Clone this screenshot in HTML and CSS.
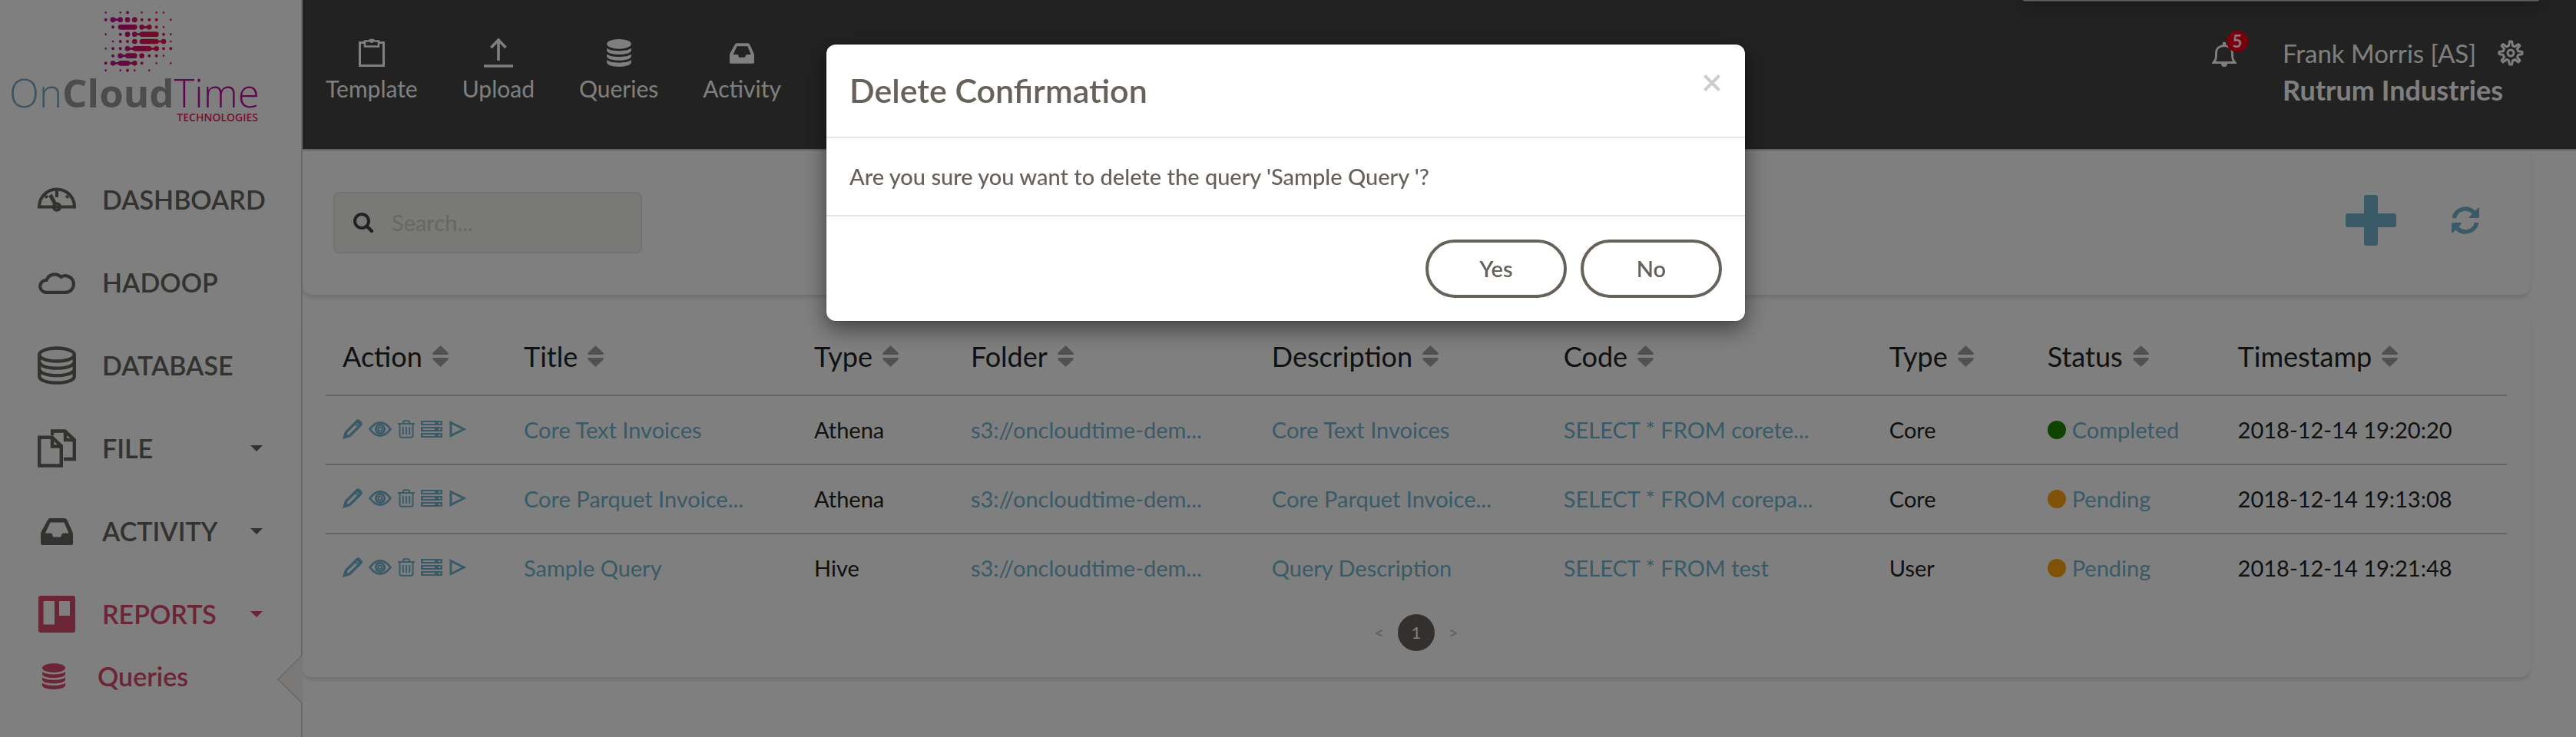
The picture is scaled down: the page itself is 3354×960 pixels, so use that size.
FILE: index.html
```html
<!DOCTYPE html>
<html lang="en">
<head>
<meta charset="utf-8">
<title>OnCloudTime - Queries</title>
<link rel="stylesheet" href="styles.css">
</head>
<body>
<svg class="sprite" aria-hidden="true">
  <symbol id="i-gauge" viewBox="0 0 50 32"><path d="M2 25.500A23 23 0 0 1 48 25.500z" fill="none" stroke="currentColor" stroke-width="4"/><path d="M25 4v9" stroke="currentColor" stroke-width="4"/><path d="M16.500 10l6.500 12" stroke="currentColor" stroke-width="5"/><path d="M9 9.500l4 4M41 9.500l-4 4M9.500 14l4-3M40.500 14l-4-3" stroke="currentColor" stroke-width="2"/><circle cx="25" cy="25.500" r="4.200" fill="none" stroke="currentColor" stroke-width="4"/></symbol>
  <symbol id="i-cloud" viewBox="0 0 50 29"><path d="M10 26.800A8 8 0 0 1 11.500 10.900A11.500 11.500 0 0 1 30.500 6.800A10.800 10.800 0 1 1 37 26.800z" fill="none" stroke="currentColor" stroke-width="4.200"/></symbol>
  <symbol id="i-dbline" viewBox="0 0 50 50"><g fill="none" stroke="currentColor" stroke-width="4.400"><ellipse cx="25" cy="11" rx="22.800" ry="8.500"/><path d="M2.200 11v28c0 11.500 45.600 11.500 45.600 0V11M2.200 20c0 11.500 45.600 11.500 45.600 0M2.200 29.500c0 11.500 45.600 11.500 45.600 0"/></g></symbol>
  <symbol id="i-files" viewBox="0 0 50 50"><g fill="none" stroke="currentColor" stroke-width="4.400"><path d="M2.200 10.700H19L30.800 22V47.500H2.200z"/><path d="M19 10V22.500H31"/><path d="M19.200 8V2.500H35.500L47.800 14V39H34"/><path d="M36 2V14H48"/></g></symbol>
  <symbol id="i-inbox" viewBox="0 0 42 35"><path fill="currentColor" fill-rule="evenodd" d="M9 2.500Q10 0 12 0H31Q33.500 0 34.500 2.500L41 17Q42 19 42 21V33Q42 35 40 35H2Q0 35 0 33V21Q0 19 1 17zM12.500 5.500L6 19.500H13Q14.500 19.500 15 21L16 24.500H26L27.500 21Q28 19.500 29.500 19.500H36.500L30.500 5.500z"/></symbol>
  <symbol id="i-board" viewBox="0 0 48 48"><path fill="currentColor" fill-rule="evenodd" d="M3 0H45Q48 0 48 3V45Q48 48 45 48H3Q0 48 0 45V3Q0 0 3 0zM6.500 7V37.500H21V7zM27 7V26H41V7z"/></symbol>
  <symbol id="i-db" viewBox="0 0 30 34"><g fill="currentColor"><ellipse cx="15" cy="6" rx="15" ry="6"/><path id="band" d="M0 11c5 4.500 25 4.500 30 0v3.500c-2 6-28 6-30 0z"/><use href="#band" y="7.300"/><path d="M0 25.600c5 4.500 25 4.500 30 0v3.500c-2 6.500-28 6.500-30 0z"/></g></symbol>
  <symbol id="i-clip" viewBox="0 0 34 38"><g fill="none" stroke="currentColor"><path d="M8 5.500H1.500V35.500H32.500V5.500H26" stroke-width="3"/><path d="M8 3.500H13Q17 0 21 3.500H26V10.500H8z" stroke-width="2.600"/></g><circle cx="17" cy="3.500" r="2.500" fill="currentColor"/></symbol>
  <symbol id="i-up" viewBox="0 0 38 38"><path d="M19 29V3M9.500 12L19 2L28.500 12M0 36H38" fill="none" stroke="currentColor" stroke-width="3.600"/></symbol>
  <symbol id="i-bell" viewBox="0 0 32 32"><path d="M2 26.500C5.500 23 5.500 20 5.500 13.500C5.500 1.500 26.500 1.500 26.500 13.500C26.500 20 26.500 23 30 26.500z" fill="none" stroke="currentColor" stroke-width="2.800"/><path d="M16 0V4" stroke="currentColor" stroke-width="4"/><path d="M12 28h8q0 4-4 4t-4-4z" fill="currentColor"/></symbol>
  <symbol id="i-gear" viewBox="0 0 34 34"><g fill="none" stroke="currentColor" stroke-width="3" stroke-linejoin="round"><path d="M15.500 2H18.500L19.500 7.500L22.500 8.800L27 5.500L29 7.500L25.500 11.500L26.800 14.800L32 15.500V18.500L26.800 19.500L25.500 22.500L29 27L27 29L22.500 25.500L19.500 26.800L18.500 32H15.500L14.500 26.800L11.500 25.500L7 29L5 27L8.500 22.500L7.200 19.500L2 18.500V15.500L7.200 14.800L8.500 11.500L5 7.500L7 5.500L11.500 8.800L14.500 7.500z"/><circle cx="17" cy="17" r="4"/></g></symbol>
  <symbol id="i-search" viewBox="0 0 26 26"><circle cx="11" cy="11" r="9" fill="none" stroke="currentColor" stroke-width="4"/><path d="M17.500 17.500L24 24" stroke="currentColor" stroke-width="4.500" stroke-linecap="round"/></symbol>
  <symbol id="i-plus" viewBox="0 0 66 66"><path fill="currentColor" d="M27 0H39Q42 0 42 3V24H63Q66 24 66 27V39Q66 42 63 42H42V63Q42 66 39 66H27Q24 66 24 63V42H3Q0 42 0 39V27Q0 24 3 24H24V3Q24 0 27 0z"/></symbol>
  <symbol id="i-sync" viewBox="0 0 36 36"><g id="half"><path d="M3.200 15A15 15 0 0 1 29 8" fill="none" stroke="currentColor" stroke-width="5.600"/><path fill="currentColor" d="M34.500 1.800Q36 1 36 3V13Q36 15 34 15H24Q22 15 23.500 13z"/></g><use href="#half" transform="rotate(180 18 18)"/></symbol>
  <symbol id="i-pencil" viewBox="0 0 26 26"><g fill="none" stroke="currentColor" stroke-width="3.400"><path d="M3 23L5 16.500L18.500 3Q20 1.200 21.500 2.600L23.600 4.700Q25 6.300 23.200 7.800L9.500 21.500z"/><path d="M16 5L21.500 10.500M18.500 3L23.500 8" stroke-width="2.200"/></g><path d="M0 26L2.500 17L9 23.500z" fill="currentColor"/></symbol>
  <symbol id="i-eye" viewBox="0 0 30 20"><g fill="none" stroke="currentColor" stroke-width="2.800"><path d="M1.500 10Q8 1.400 15 1.400T28.500 10Q22 18.600 15 18.600T1.500 10z"/><circle cx="15" cy="10" r="5.600"/></g><circle cx="15" cy="10" r="2.600" fill="none" stroke="currentColor" stroke-width="2"/></symbol>
  <symbol id="i-trash" viewBox="0 0 22 24"><path d="M0 5H22M6.500 5Q6.500 1.200 9 1.200H13Q15.500 1.200 15.500 5M2.500 5V20.500Q2.500 22.800 5 22.800H17Q19.500 22.800 19.500 20.500V5M6.800 9V19M11 9V19M15.200 9V19" fill="none" stroke="currentColor" stroke-width="2"/></symbol>
  <symbol id="i-rows" viewBox="0 0 28 22"><path fill="currentColor" fill-rule="evenodd" d="M0 0H28V6H0zM2.500 2V4H18V2zM23 2V4H25.500V2zM0 8H28V14H0zM2.500 10V12H18V10zM23 10V12H25.500V10zM0 16H28V22H0zM2.500 18V20H18V18zM23 18V20H25.500V18z"/></symbol>
  <symbol id="i-play" viewBox="0 0 22 22"><path d="M2 2.500L19 11L2 19.500z" fill="none" stroke="currentColor" stroke-width="3"/></symbol>
  <symbol id="i-sort" viewBox="0 0 21 28"><path fill="currentColor" d="M10.500 0L20 9Q22 12 19 12H2Q-1 12 1 9zM10.500 28L20 19Q22 16 19 16H2Q-1 16 1 19z"/></symbol>
  <symbol id="i-close" viewBox="0 0 22 22"><path d="M1.500 1.500L20.500 20.500M20.500 1.500L1.500 20.500" stroke="currentColor" stroke-width="4"/></symbol>
</svg>

<div class="app">
  <aside class="sidebar">
    <a class="logo" href="#">
      <svg class="logo-mark" viewBox="405 43 270 240" fill="none" stroke="url(#mark)" stroke-linecap="round">
        <defs><linearGradient id="mark" gradientUnits="userSpaceOnUse" x1="430" y1="0" x2="600" y2="0"><stop offset="0" stop-color="#b8129a"/><stop offset="1" stop-color="#e61650"/></linearGradient></defs>
        <path stroke-width="8" d="M413 50h.1M470 50h.1M554 50h.1M611 50h.1M639 50h.1M667 78h.1M639 107h.1M413 135h.1M667 135h.1M441 163h.1M667 163h.1M413 191h.1M639 219h.1M611 248h.1M667 248h.1M413 276h.1M470 276h.1M526 276h.1M583 276h.1M441 78.100L470 78M554 107.100L583 107M526 135.100L555 135M611 163.100L639 163M498 191.100L611 191M470 219.100L500 219M441 248.100L526 248"/>
        <path stroke-width="12" d="M498 50h.1M413 78h.1M554 78h.1M583 78h.1M611 78h.1M441 107h.1M611 107h.1M470 135h.1M639 135h.1M470 163h.1M498 163h.1M441 191h.1M470 191h.1M639 191h.1M667 191h.1M441 219h.1M583 219h.1M611 219h.1M413 248h.1M554 248h.1M498 276h.1"/>
        <path stroke-width="20" d="M441 78h.1M470 78h.1M498 78h.1M526 78h.1M471 107.100L526 107M554 107h.1M583 107h.1M498 135h.1M526 135h.1M555 135.100L610 135M526 163h.1M555 163.100L610 163M639 163h.1M498 191h.1M527 191.100L582 191M611 191h.1M470 219h.1M499 219.100L526 219M554 219h.1M441 248h.1M471 248.100L498 248M526 248h.1"/>
      </svg>
      <span class="logo-name"><span class="on">On</span><span class="cloud">Cloud</span><span class="time">Time</span></span>
      <span class="logo-sub">TECHNOLOGIES</span>
    </a>
    <nav class="menu">
      <a class="item" href="#"><span class="pic"><svg class="w50 gauge"><use href="#i-gauge"/></svg></span><span class="label">DASHBOARD</span></a>
      <a class="item" href="#"><span class="pic"><svg class="w50 cloudpic"><use href="#i-cloud"/></svg></span><span class="label">HADOOP</span></a>
      <a class="item" href="#"><span class="pic"><svg class="w50 square"><use href="#i-dbline"/></svg></span><span class="label">DATABASE</span></a>
      <a class="item" href="#"><span class="pic"><svg class="w50 square"><use href="#i-files"/></svg></span><span class="label">FILE</span><span class="caret"></span></a>
      <a class="item" href="#"><span class="pic"><svg class="tray"><use href="#i-inbox"/></svg></span><span class="label">ACTIVITY</span><span class="caret"></span></a>
      <a class="item active" href="#"><span class="pic"><svg class="board"><use href="#i-board"/></svg></span><span class="label">REPORTS</span><span class="caret"></span></a>
      <a class="item sub active" href="#"><svg class="db"><use href="#i-db"/></svg><span class="label">Queries</span><svg class="notch" viewBox="0 0 33 66"><path d="M33 1L1 33L33 65" fill="#f4f3ef" stroke="#d2d0cc" stroke-width="1.500"/></svg></a>
    </nav>
  </aside>

  <div class="main">
    <header class="topbar">
      <nav class="tools">
        <a href="#"><span class="glyph"><svg class="clip"><use href="#i-clip"/></svg></span>Template</a>
        <a href="#"><span class="glyph"><svg class="up"><use href="#i-up"/></svg></span>Upload</a>
        <a href="#"><span class="glyph"><svg class="stack"><use href="#i-db"/></svg></span>Queries</a>
        <a href="#"><span class="glyph"><svg class="inbox"><use href="#i-inbox"/></svg></span>Activity</a>
      </nav>
      <div class="account">
        <button class="bell" aria-label="Notifications"><svg><use href="#i-bell"/></svg><span class="badge">5</span></button>
        <div class="who">
          <div class="user"><span>Frank Morris [AS]</span><button class="gear" aria-label="Settings"><svg><use href="#i-gear"/></svg></button></div>
          <div class="company">Rutrum Industries</div>
        </div>
      </div>
    </header>

    <main class="content">
      <section class="card toolbar">
        <label class="search"><svg><use href="#i-search"/></svg><input type="text" placeholder="Search..." aria-label="Search"></label>
        <div class="buttons">
          <button class="add" aria-label="Add"><svg><use href="#i-plus"/></svg></button>
          <button class="sync" aria-label="Refresh"><svg><use href="#i-sync"/></svg></button>
        </div>
      </section>

      <section class="card list">
        <table>
          <colgroup><col class="c-action"><col class="c-title"><col class="c-engine"><col class="c-folder"><col class="c-desc"><col class="c-code"><col class="c-type"><col class="c-status"><col class="c-time"></colgroup>
          <thead><tr>
            <th><button>Action<svg><use href="#i-sort"/></svg></button></th>
            <th><button>Title<svg><use href="#i-sort"/></svg></button></th>
            <th><button>Type<svg><use href="#i-sort"/></svg></button></th>
            <th><button>Folder<svg><use href="#i-sort"/></svg></button></th>
            <th><button>Description<svg><use href="#i-sort"/></svg></button></th>
            <th><button>Code<svg><use href="#i-sort"/></svg></button></th>
            <th><button>Type<svg><use href="#i-sort"/></svg></button></th>
            <th><button>Status<svg><use href="#i-sort"/></svg></button></th>
            <th><button>Timestamp<svg><use href="#i-sort"/></svg></button></th>
          </tr></thead>
          <tbody>
            <tr>
              <td><div class="acts"><button aria-label="Edit"><svg class="a-pencil"><use href="#i-pencil"/></svg></button><button aria-label="View"><svg class="a-eye"><use href="#i-eye"/></svg></button><button aria-label="Delete"><svg class="a-trash"><use href="#i-trash"/></svg></button><button aria-label="Log"><svg class="a-rows"><use href="#i-rows"/></svg></button><button aria-label="Run"><svg class="a-play"><use href="#i-play"/></svg></button></div></td>
              <td><a href="#">Core Text Invoices</a></td><td>Athena</td><td><a href="#">s3://oncloudtime-dem...</a></td><td><a href="#">Core Text Invoices</a></td><td><a href="#">SELECT * FROM corete...</a></td><td>Core</td><td><a class="status done" href="#">Completed</a></td><td>2018-12-14 19:20:20</td>
            </tr>
            <tr>
              <td><div class="acts"><button aria-label="Edit"><svg class="a-pencil"><use href="#i-pencil"/></svg></button><button aria-label="View"><svg class="a-eye"><use href="#i-eye"/></svg></button><button aria-label="Delete"><svg class="a-trash"><use href="#i-trash"/></svg></button><button aria-label="Log"><svg class="a-rows"><use href="#i-rows"/></svg></button><button aria-label="Run"><svg class="a-play"><use href="#i-play"/></svg></button></div></td>
              <td><a href="#">Core Parquet Invoice...</a></td><td>Athena</td><td><a href="#">s3://oncloudtime-dem...</a></td><td><a href="#">Core Parquet Invoice...</a></td><td><a href="#">SELECT * FROM corepa...</a></td><td>Core</td><td><a class="status" href="#">Pending</a></td><td>2018-12-14 19:13:08</td>
            </tr>
            <tr>
              <td><div class="acts"><button aria-label="Edit"><svg class="a-pencil"><use href="#i-pencil"/></svg></button><button aria-label="View"><svg class="a-eye"><use href="#i-eye"/></svg></button><button aria-label="Delete"><svg class="a-trash"><use href="#i-trash"/></svg></button><button aria-label="Log"><svg class="a-rows"><use href="#i-rows"/></svg></button><button aria-label="Run"><svg class="a-play"><use href="#i-play"/></svg></button></div></td>
              <td><a href="#">Sample Query</a></td><td>Hive</td><td><a href="#">s3://oncloudtime-dem...</a></td><td><a href="#">Query Description</a></td><td><a href="#">SELECT * FROM test</a></td><td>User</td><td><a class="status" href="#">Pending</a></td><td>2018-12-14 19:21:48</td>
            </tr>
          </tbody>
        </table>
        <nav class="pager" aria-label="Pages"><button>&lt;</button><button class="current">1</button><button>&gt;</button></nav>
      </section>
    </main>
  </div>
</div>

<div class="overlay">
  <div class="modal" role="dialog" aria-labelledby="modal-title">
    <div class="modal-head"><h2 id="modal-title">Delete Confirmation</h2><button class="close" aria-label="Close"><svg><use href="#i-close"/></svg></button></div>
    <p class="modal-body">Are you sure you want to delete the query 'Sample Query '?</p>
    <div class="modal-foot"><button>Yes</button><button>No</button></div>
  </div>
</div>
<div class="toast"></div>
</body>
</html>
```

FILE: styles.css
```css
* { box-sizing: border-box; }
html, body { height: 100%; }
body { margin: 0; background: #fff; color: #222; font-family: Lato, "Open Sans", sans-serif; font-size: 29px; line-height: 40px; overflow: hidden; }
a { color: inherit; text-decoration: none; }
button { margin: 0; padding: 0; border: 0; background: none; color: inherit; font: inherit; cursor: pointer; }
svg { display: block; flex: none; }
.sprite { position: absolute; width: 0; height: 0; }

.app { display: flex; min-height: 100%; }

/* Sidebar */
.sidebar { flex: none; width: 394px; border-right: 2px solid #d4d4d4; color: #66645f; }
.logo { display: flex; flex-direction: column; align-items: center; height: 206px; padding-top: 14px; font-family: "Open Sans", sans-serif; }
.logo-mark { width: 90px; height: 80px; margin-right: 32px; }
.logo-name { align-self: flex-start; padding-left: 12px; font-size: 51px; line-height: 52px; font-weight: 300; }
.on { color: #74aabf; }
.cloud { color: #96989c; font-weight: 700; }
.time { color: #b8109c; }
.logo-sub { align-self: flex-end; padding-right: 56px; color: #e81e5c; font-size: 14px; line-height: 14px; font-weight: 600; }
.menu { display: flex; flex-direction: column; }
.item { display: flex; align-items: center; height: 108px; padding: 0 50px 0 49px; font-size: 34px; font-weight: 600; }
.item.active { color: #d8486e; }
.pic { display: flex; justify-content: center; width: 50px; margin-right: 34px; }
.w50 { width: 50px; }
.gauge { height: 32px; }
.cloudpic { height: 29px; }
.square { height: 50px; }
.tray { width: 42px; height: 35px; }
.board { width: 48px; height: 48px; }
.label { flex: 1; }
.caret { border: 8px solid transparent; border-top-color: currentColor; border-bottom: 0; }
.item.sub { position: relative; height: 58px; padding: 0 50px 4px 55px; }
.db { width: 30px; height: 34px; margin-right: 42px; }
.notch { position: absolute; right: -2px; top: -2px; width: 33px; height: 66px; }

/* Top bar */
.main { flex: 1; min-width: 0; }
.topbar { display: flex; justify-content: space-between; height: 196px; padding: 43px 68px 0 30px; border-bottom: 2px solid #c8c8c8; background: #444; color: #fff; }
.tools { display: flex; gap: 58px; font-size: 30px; }
.tools a { display: flex; flex-direction: column; align-items: center; }
.glyph { display: flex; align-items: center; height: 52px; }
.clip { width: 34px; height: 38px; }
.up { width: 38px; height: 38px; }
.stack { width: 32px; height: 36px; }
.inbox { width: 32px; height: 27px; }
.account { display: flex; gap: 60px; }
.bell { position: relative; align-self: flex-start; margin-top: 12px; }
.bell svg { width: 32px; height: 32px; }
.badge { position: absolute; left: 19px; top: -15px; width: 28px; height: 28px; border-radius: 50%; background: #f00018; font-size: 22px; line-height: 28px; font-weight: 700; }
.who { width: 314px; }
.user { display: flex; align-items: center; justify-content: space-between; height: 52px; font-size: 33px; }
.gear svg { width: 34px; height: 34px; }
.company { font-size: 36px; line-height: 44px; font-weight: 700; }

/* Cards */
.content { padding-right: 60px; }
.card { border-radius: 0 0 12px 12px; background: #fff; box-shadow: 0 4px 4px rgba(204, 197, 185, 0.5); }
.toolbar { display: flex; align-items: center; justify-content: space-between; height: 188px; padding: 0 66px 0 40px; }
.search { display: flex; align-items: center; gap: 24px; width: 402px; height: 80px; padding: 0 24px; border: 2px solid #e6e4de; border-radius: 8px; background: #f3f2ee; }
.search svg { width: 26px; height: 26px; color: #444; }
.search input { flex: 1; min-width: 0; padding: 0; border: 0; outline: 0; background: none; font: inherit; }
.search input::placeholder { color: #cfcec8; opacity: 1; }
.buttons { display: flex; align-items: center; gap: 72px; padding-bottom: 6px; color: #72b4cc; }
.add svg { width: 66px; height: 66px; }
.sync svg { width: 36px; height: 36px; }

.list { margin-top: 20px; padding: 10px 30px 34px; border-radius: 12px; }
table { width: 100%; table-layout: fixed; border-collapse: separate; border-spacing: 0; }
.c-action { width: 8.31%; }
.c-title { width: 13.31%; }
.c-engine { width: 7.18%; }
.c-folder { width: 13.8%; }
.c-desc { width: 13.38%; }
.c-code { width: 14.93%; }
.c-type { width: 7.25%; }
.c-status { width: 8.73%; }
.c-time { width: 13.11%; }
th, td { padding: 0 0 0 22px; border-bottom: 2px solid #ccc5b9; text-align: left; white-space: nowrap; }
th { height: 102px; font-weight: 400; font-size: 36px; }
th button { display: flex; align-items: center; gap: 13px; }
th svg { width: 21px; height: 28px; color: #a2a2a2; }
td { height: 90px; }
tbody tr:last-child td { border-bottom-color: transparent; }
td a, .acts { color: #72b4cc; }
.acts { display: flex; align-items: center; gap: 8px; padding-bottom: 3px; }
.a-pencil { width: 26px; height: 26px; }
.a-eye { width: 30px; height: 20px; }
.a-trash { width: 22px; height: 24px; }
.a-rows { width: 28px; height: 22px; }
.a-play { width: 24px; height: 22px; }
.status { display: flex; align-items: center; gap: 8px; }
.status::before { content: ""; width: 24px; height: 24px; border-radius: 50%; background: #ffa510; }
.status.done::before { background: #1c8800; }
.pager { display: flex; align-items: center; justify-content: center; gap: 18px; margin-top: 14px; color: #bbb; font-size: 22px; line-height: 48px; }
.current { width: 48px; height: 48px; border-radius: 50%; background: #66615b; color: #fff; }

/* Modal */
.overlay { position: fixed; inset: 0; padding: 58px 6px 0 0; background: rgba(0, 0, 0, 0.5); }
.modal { width: 1196px; max-width: 100%; margin: 0 auto; border-radius: 12px; background: #fff; color: #66615b; box-shadow: 0 10px 30px rgba(0, 0, 0, 0.5), 0 0 2px rgba(0, 0, 0, 0.5); }
.modal-head { display: flex; align-items: flex-start; justify-content: space-between; height: 122px; padding: 30px 32px 30px 30px; border-bottom: 2px solid #e5e5e5; }
.modal-head h2 { margin: 0; font-size: 43px; line-height: 60px; font-weight: 600; }
.close { margin-top: 9px; color: #ccc; }
.close svg { width: 22px; height: 22px; }
.modal-body { margin: 0; padding: 30px; border-bottom: 2px solid #e5e5e5; font-weight: 500; }
.modal-foot { display: flex; justify-content: flex-end; gap: 18px; padding: 30px; }
.modal-foot button { width: 184px; height: 76px; border: 4px solid #66615b; border-radius: 38px; font-weight: 600; }

/* Panel edge that hangs over the top of the window */
.toast { position: absolute; top: -12px; right: 44px; width: 680px; height: 15px; border: 1px solid #080808; border-radius: 12px; background: #5a5a5a; box-shadow: 0 6px 24px rgba(0, 0, 0, 0.3); }
```
